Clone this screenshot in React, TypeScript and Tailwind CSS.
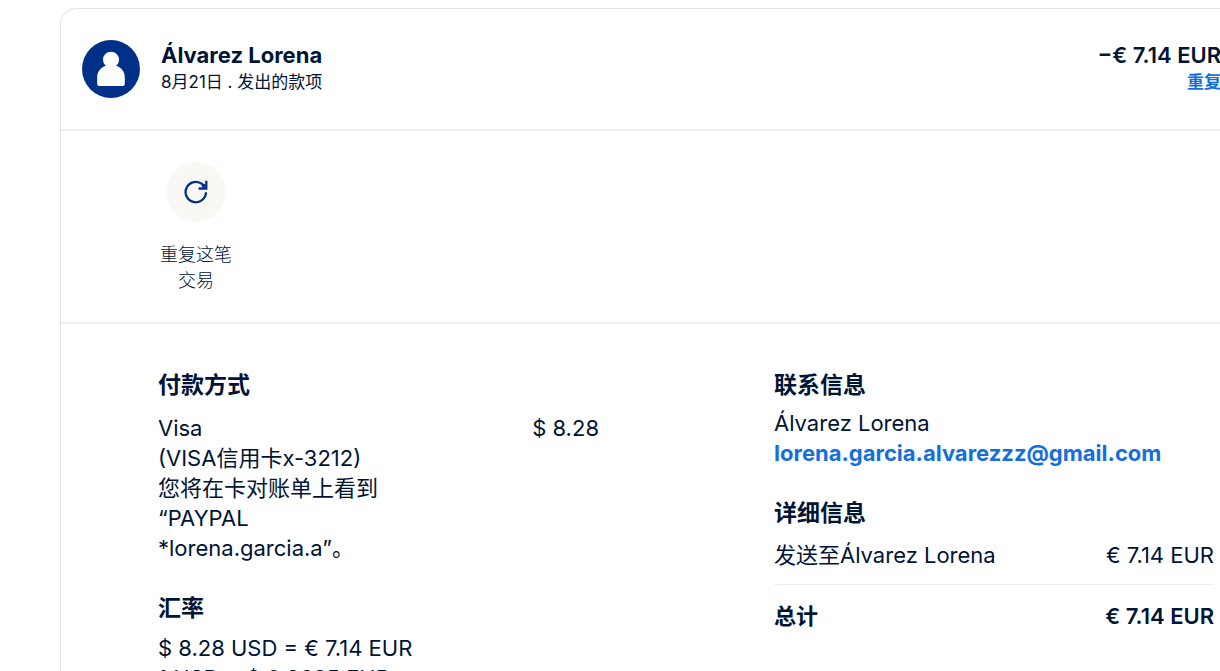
import type { ReactNode } from "react";

function Heading({ children }: { children: ReactNode }) {
  return <h2 className="text-[23px] leading-[30px] font-bold">{children}</h2>;
}

function PersonIcon() {
  return (
    <svg viewBox="0 0 58 58" className="size-[58px] shrink-0" aria-hidden="true">
      <circle cx="29" cy="29" r="29" fill="#003087" />
      <circle cx="29" cy="19.700" r="8" fill="#fff" />
      <path
        d="M24 24.500h10v1.300c5.600 1.700 8.800 6 8.800 12v6.200a2 2 0 0 1-2 2H17.200a2 2 0 0 1-2-2v-6.200c0-6 3.200-10.300 8.800-12z"
        fill="#fff"
      />
    </svg>
  );
}

function RepeatIcon() {
  return (
    <svg viewBox="0 0 24 24" className="size-6" fill="none" stroke="#003087" strokeWidth="2.300" aria-hidden="true">
      <path d="M22 12.300a10.200 10.200 0 1 1-3.700-8.100l2.800 2.800" />
      <path d="M22.300 0.800v7.700h-7.700" />
      <path d="M17.500 4.500l3.800-0.500v3.600h-3z" fill="#003087" stroke="none" />
    </svg>
  );
}

export default function App() {
  return (
    <main className="h-screen overflow-hidden bg-white pt-2 pl-[60px] font-['Inter','Noto_Sans_CJK_SC',sans-serif] text-[#001435]">
      <article className="-mr-[22px] rounded-2xl border border-[#e3e3e8]">
        {/* Header */}
        <header className="flex items-start gap-[21px] border-b-2 border-[#eeeeee] pt-[31px] pr-5 pb-[31px] pl-[21px]">
          <PersonIcon />
          <div className="grow">
            <h1 className="text-[22px] leading-[30px] font-bold">Álvarez Lorena</h1>
            <p className="text-[17px] leading-6">8月21日 . 发出的款项</p>
          </div>
          <div className="text-right">
            <p className="text-[22px] leading-[30px] font-semibold">−€ 7.14 EUR</p>
            <a href="#repeat" className="block text-[17px] leading-6 font-bold text-[#146fdd]">
              重复
            </a>
          </div>
        </header>

        {/* Actions */}
        <section className="border-b-2 border-[#eeeeee] px-[99px] pt-[31px] pb-7">
          <button type="button" className="flex w-[72px] flex-col items-center gap-5">
            <span className="flex size-[60px] items-center justify-center rounded-full bg-[#faf8f5]">
              <RepeatIcon />
            </span>
            <span className="text-[18px] leading-[26px] font-light">重复这笔交易</span>
          </button>
        </section>

        {/* Details */}
        <div className="grid grid-cols-[441px_1fr] gap-[175px] pt-[46px] pr-[27px] pl-[97px] text-[22px] leading-[30px]">
          <section>
            <Heading>付款方式</Heading>
            <div className="mt-[13px] flex justify-between">
              <p className="w-[230px]">
                Visa
                <br />
                (VISA信用卡x-3212)
                <br />
                您将在卡对账单上看到
                <br />
                “PAYPAL
                <br />
                *lorena.garcia.a”。
              </p>
              <p>$ 8.28</p>
            </div>
            <div className="mt-[30px]">
              <Heading>汇率</Heading>
              <p className="mt-[10px]">
                $ 8.28 USD = € 7.14 EUR
                <br />
                1 USD = $ 0.8625 EUR
              </p>
            </div>
          </section>

          <section>
            <Heading>联系信息</Heading>
            <p className="mt-2">Álvarez Lorena</p>
            <a href="mailto:lorena.garcia.alvarezzz@gmail.com" className="block font-bold text-[#146fdd]">
              lorena.garcia.alvarezzz@gmail.com
            </a>
            <div className="mt-[30px]">
              <Heading>详细信息</Heading>
            </div>
            <dl>
              <div className="mt-3 flex justify-between border-b border-[#eeeeee] pb-[14px]">
                <dt>发送至Álvarez Lorena</dt>
                <dd>€ 7.14 EUR</dd>
              </div>
              <div className="mt-4 flex justify-between font-semibold">
                <dt className="font-bold">总计</dt>
                <dd>€ 7.14 EUR</dd>
              </div>
            </dl>
          </section>
        </div>
      </article>
    </main>
  );
}
